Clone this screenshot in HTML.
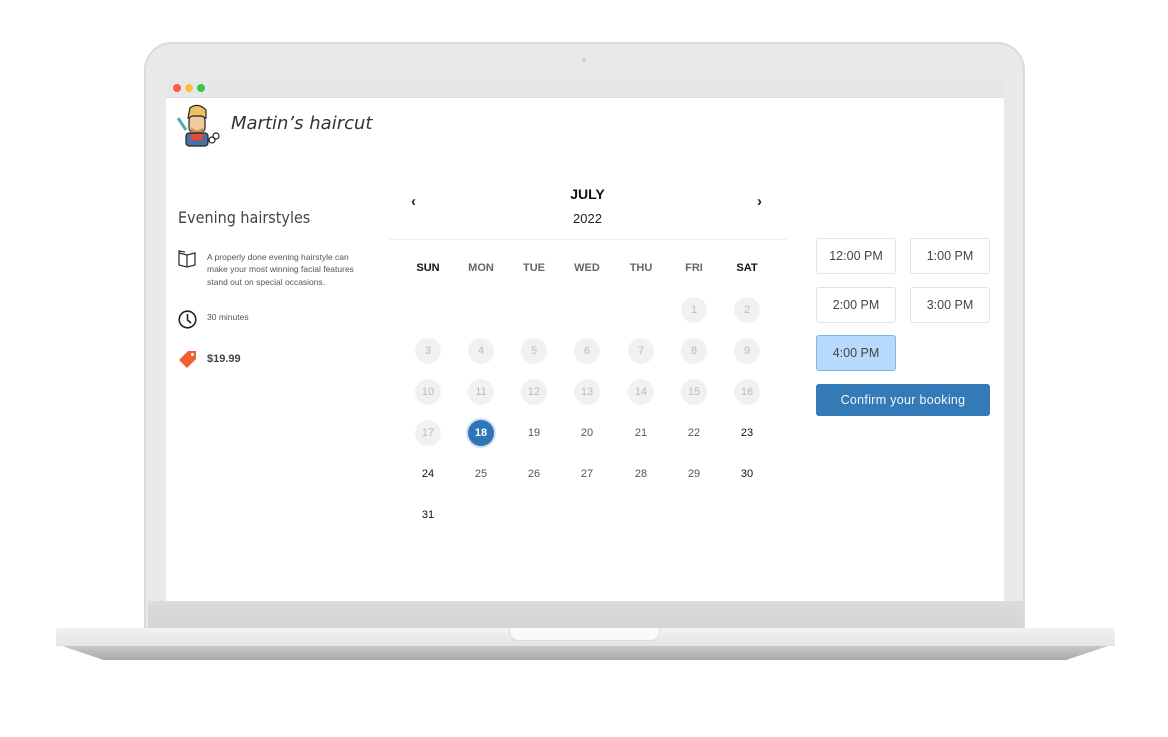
<!DOCTYPE html>
<html><head><style>
*{margin:0;padding:0;box-sizing:border-box}
body{width:1168px;height:737px;background:#fff;position:relative;overflow:hidden;font-family:"Liberation Sans",sans-serif}
.abs{position:absolute}
.bezel{left:144px;top:42px;width:881px;height:592px;background:#e9e9eb;border-radius:28px 28px 0 0;border:2px solid #dadadc}
.screen{left:166px;top:78px;width:838px;height:523px;background:#fff}
.tbar{left:166px;top:78px;width:838px;height:20px;background:#e7e7e7;border-bottom:1px solid #ddd}
.dot{width:8px;height:8px;border-radius:50%;top:84px}
.chin{left:148px;top:601px;width:875px;height:27px;background:linear-gradient(#dcdcde,#d4d4d6)}
.base{left:56px;top:628px;width:1059px;height:18px;background:linear-gradient(#f2f2f3,#e4e4e6);border-radius:3px 3px 0 0}
.base2{left:62px;top:646px;width:1046px;height:14px;background:linear-gradient(#c8c8cb,#a9a9ad);clip-path:polygon(0 0,100% 0,96% 100%,4% 100%);border-radius:0 0 8px 8px}
.notch{left:509px;top:628px;width:151px;height:13px;background:#fafafa;border-radius:0 0 10px 10px;border:1px solid #ddd;border-top:none}
.c{position:absolute;width:26px;height:26px;border-radius:50%;font-family:"Liberation Sans",sans-serif;font-size:11px;line-height:26px;text-align:center;color:#555;margin-left:-13px;margin-top:-13px}
.g{background:#f1f1f1;color:#bbb}
.hd{position:absolute;top:262px;font-size:11px;font-weight:bold;color:#666;width:50px;margin-left:-25px;text-align:center}
.slot{position:absolute;width:80px;height:36px;border:1px solid #e3e3e3;border-radius:3px;font-family:"Liberation Sans",sans-serif;font-size:12.5px;color:#444;text-align:center;line-height:35px}
</style></head><body>
<div class="abs bezel"></div>
<div class="abs" style="left:582px;top:58px;width:4px;height:4px;border-radius:50%;background:#ccc"></div>
<div class="abs screen"></div>
<div class="abs tbar"></div>
<div class="abs dot" style="left:173px;background:#fc5753"></div>
<div class="abs dot" style="left:185px;background:#fdbc40"></div>
<div class="abs dot" style="left:197px;background:#33c748"></div>
<div class="abs chin"></div>
<div class="abs base"></div>
<div class="abs base2"></div>
<div class="abs notch"></div>

<svg class="abs" style="left:174px;top:104px" width="46" height="44" viewBox="0 0 46 44">
<path d="M16 4 Q24 -2 32 6 L32 14 L14 14 Z" fill="#f0c060" stroke="#222" stroke-width="1.2"/>
<rect x="15" y="12" width="16" height="16" rx="4" fill="#f2c9a0" stroke="#222" stroke-width="1.2"/>
<path d="M17 23 Q23 30 29 23 L29 28 Q23 32 17 28Z" fill="#c88a50"/>
<rect x="12" y="29" width="22" height="13" rx="3" fill="#4a6fa0" stroke="#222" stroke-width="1.2"/>
<rect x="17" y="30" width="12" height="6" fill="#e05030"/>
<path d="M4 14 L12 26" stroke="#5ab" stroke-width="3"/>
<circle cx="38" cy="36" r="3" fill="none" stroke="#222" stroke-width="1.2"/><circle cx="42" cy="32" r="3" fill="none" stroke="#222" stroke-width="1.2"/>
</svg>
<div class="abs" style="left:231px;top:113px;font-family:'DejaVu Sans',cursive;font-style:italic;font-size:18px;color:#333">Martin’s haircut</div>

<div class="abs" style="left:178px;top:208px;font-family:'DejaVu Sans Condensed','DejaVu Sans',sans-serif;font-size:16px;color:#444">Evening hairstyles</div>
<svg class="abs" style="left:178px;top:250px" width="18" height="18" viewBox="0 0 18 18" fill="none" stroke="#333" stroke-width="1.3"><path d="M1 3 L9 5 L17 3 L17 15 L9 17 L1 15Z M9 5 L9 17 M1 3 L1 1 L7 2"/></svg>
<div class="abs" style="left:207px;top:251px;font-size:8.5px;line-height:12.3px;color:#555;width:160px">A properly done evening hairstyle can make your most winning facial features stand out on special occasions.</div>
<svg class="abs" style="left:178px;top:310px" width="19" height="19" viewBox="0 0 19 19" fill="none" stroke="#222" stroke-width="1.6"><circle cx="9.5" cy="9.5" r="8.3"/><path d="M9.5 4 V10 L13 13"/></svg>
<div class="abs" style="left:207px;top:312px;font-size:8.5px;color:#555">30 minutes</div>
<svg class="abs" style="left:178px;top:349px" width="20" height="20" viewBox="0 0 20 20"><path d="M1 11 L10 2 L18 2 L18 10 L9 19Z" fill="#f06030"/><circle cx="14.5" cy="5.5" r="1.5" fill="#fff"/></svg>
<div class="abs" style="left:207px;top:353px;font-size:11px;font-weight:bold;color:#444">$19.99</div>

<div class="abs" style="left:411px;top:193px;font-size:15px;font-weight:bold;color:#222">‹</div>
<div class="abs" style="left:757px;top:193px;font-size:15px;font-weight:bold;color:#222">›</div>
<div class="abs" style="left:540px;top:186px;width:95px;text-align:center;font-size:14px;font-weight:bold;color:#111">JULY</div>
<div class="abs" style="left:540px;top:211px;width:95px;text-align:center;font-size:13px;color:#222">2022</div>
<div class="abs" style="left:389px;top:239px;width:398px;height:1px;background:#eee"></div>
<div class="hd" style="left:428px;color:#111">SUN</div><div class="hd" style="left:481px">MON</div><div class="hd" style="left:534px">TUE</div><div class="hd" style="left:587px">WED</div><div class="hd" style="left:641px">THU</div><div class="hd" style="left:694px">FRI</div><div class="hd" style="left:747px;color:#111">SAT</div>
<div class="c g" style="left:694px;top:310px">1</div><div class="c g" style="left:747px;top:310px">2</div>
<div class="c g" style="left:428px;top:351px">3</div><div class="c g" style="left:481px;top:351px">4</div><div class="c g" style="left:534px;top:351px">5</div><div class="c g" style="left:587px;top:351px">6</div><div class="c g" style="left:641px;top:351px">7</div><div class="c g" style="left:694px;top:351px">8</div><div class="c g" style="left:747px;top:351px">9</div>
<div class="c g" style="left:428px;top:392px">10</div><div class="c g" style="left:481px;top:392px">11</div><div class="c g" style="left:534px;top:392px">12</div><div class="c g" style="left:587px;top:392px">13</div><div class="c g" style="left:641px;top:392px">14</div><div class="c g" style="left:694px;top:392px">15</div><div class="c g" style="left:747px;top:392px">16</div>
<div class="c g" style="left:428px;top:433px">17</div><div class="c" style="left:481px;top:433px;background:#2f74b5;color:#fff;font-weight:bold;box-shadow:0 0 0 2px #cfe0f0">18</div><div class="c" style="left:534px;top:433px">19</div><div class="c" style="left:587px;top:433px">20</div><div class="c" style="left:641px;top:433px">21</div><div class="c" style="left:694px;top:433px">22</div><div class="c" style="left:747px;top:433px;color:#111">23</div>
<div class="c" style="left:428px;top:474px;color:#111">24</div><div class="c" style="left:481px;top:474px">25</div><div class="c" style="left:534px;top:474px">26</div><div class="c" style="left:587px;top:474px">27</div><div class="c" style="left:641px;top:474px">28</div><div class="c" style="left:694px;top:474px">29</div><div class="c" style="left:747px;top:474px;color:#111">30</div>
<div class="c" style="left:428px;top:515px;color:#111">31</div>

<div class="slot" style="left:816px;top:238px">12:00 PM</div>
<div class="slot" style="left:910px;top:238px">1:00 PM</div>
<div class="slot" style="left:816px;top:287px">2:00 PM</div>
<div class="slot" style="left:910px;top:287px">3:00 PM</div>
<div class="slot" style="left:816px;top:335px;background:#b6dafe;border-color:#7fb3ee">4:00 PM</div>
<div class="abs" style="left:816px;top:384px;width:174px;height:32px;background:#337ab7;border-radius:3px;color:#f4f8fc;font-size:12.5px;text-align:center;line-height:32px;letter-spacing:0.3px">Confirm your booking</div>
</body></html>
